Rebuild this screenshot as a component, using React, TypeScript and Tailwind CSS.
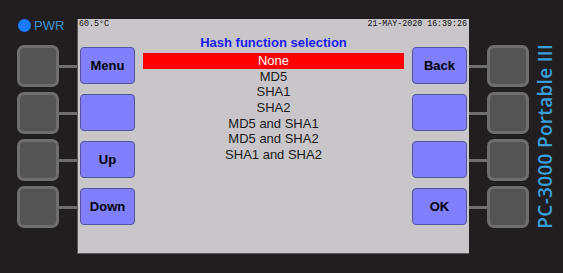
const leftKeys = ["Menu", "", "Up", "Down"];
const rightKeys = ["Back", "", "", "OK"];
const hashOptions = ["None", "MD5", "SHA1", "SHA2", "MD5 and SHA1", "MD5 and SHA2", "SHA1 and SHA2"];

function HardKey() {
  return <div className="h-[42px] w-[42px] rounded-[7px] border-[3px] border-[#6f6e6f] bg-[#555455]" />;
}

function Wire() {
  return <div className="h-[3px] w-[18px] bg-[#6f6e6f]" />;
}

function SoftKey({ label }: { label: string }) {
  return (
    <div className="flex h-[37px] w-[55px] items-center justify-center rounded-[4px] border border-[#55559a] bg-[#8080ff] text-[13px] font-bold text-black">
      {label}
    </div>
  );
}

export default function App() {
  const selected = 0;

  return (
    <div
      className="flex h-[273px] w-[563px] items-start overflow-hidden bg-[#201e1f] pt-[19px]"
      style={{ fontFamily: '"Liberation Sans", Arial, sans-serif' }}
    >
      {/* left hardware keys */}
      <div className="flex w-[77px] flex-col pl-[17px]">
        <div className="flex h-[26px] items-start gap-[3px] pl-[1px]">
          <span className="h-[13px] w-[13px] rounded-full bg-[#1a7bff]" />
          <span className="text-[13px] leading-[13px] text-[#3f90d0]">PWR</span>
        </div>
        <div className="flex flex-col gap-[5px]">
          {leftKeys.map((_, i) => (
            <div key={i} className="flex items-center">
              <HardKey />
              <Wire />
            </div>
          ))}
        </div>
      </div>

      {/* LCD screen */}
      <div className="flex h-[235px] w-[392px] flex-col border-b border-l border-[#5a5a5a] bg-[#c8c6c8]">
        <div
          className="flex h-[10px] justify-between pl-[1px] pr-[2px] text-[8.3px] leading-[10px] text-[#111]"
          style={{ fontFamily: '"Liberation Mono", monospace' }}
        >
          <span>60.5°C</span>
          <span>21-MAY-2020 16:39:26</span>
        </div>
        <div className="flex pl-[2px] pr-[2px]">
          <div className="flex flex-col gap-[10px] pt-[18px]">
            {leftKeys.map((k, i) => (
              <SoftKey key={i} label={k} />
            ))}
          </div>
          <div className="mx-[8px] flex w-[261px] flex-col pt-[6px]">
            <div className="mb-[2px] text-center text-[13px] font-bold leading-[16px] text-[#1c1cf0]">
              Hash function selection
            </div>
            {hashOptions.map((opt, i) => (
              <div
                key={opt}
                className={`h-[15.7px] text-center text-[13px] leading-[15.7px] ${
                  i === selected ? "bg-[#ff0000] text-white" : "text-[#1a1a1a]"
                }`}
              >
                {opt}
              </div>
            ))}
          </div>
          <div className="flex flex-col gap-[10px] pt-[18px]">
            {rightKeys.map((k, i) => (
              <SoftKey key={i} label={k} />
            ))}
          </div>
        </div>
      </div>

      {/* right hardware keys */}
      <div className="flex flex-col gap-[5px] pt-[26px]">
        {rightKeys.map((_, i) => (
          <div key={i} className="flex items-center">
            <Wire />
            <HardKey />
          </div>
        ))}
      </div>

      <div className="ml-[8px] flex h-[235px] items-center">
        <span
          className="rotate-180 whitespace-nowrap text-[19px] font-semibold leading-[17px] tracking-[0.3px] text-[#3a9fd9] [writing-mode:vertical-rl]"
          style={{ fontFamily: '"Open Sans", sans-serif' }}
        >
          PC-3000 Portable III
        </span>
      </div>
    </div>
  );
}
